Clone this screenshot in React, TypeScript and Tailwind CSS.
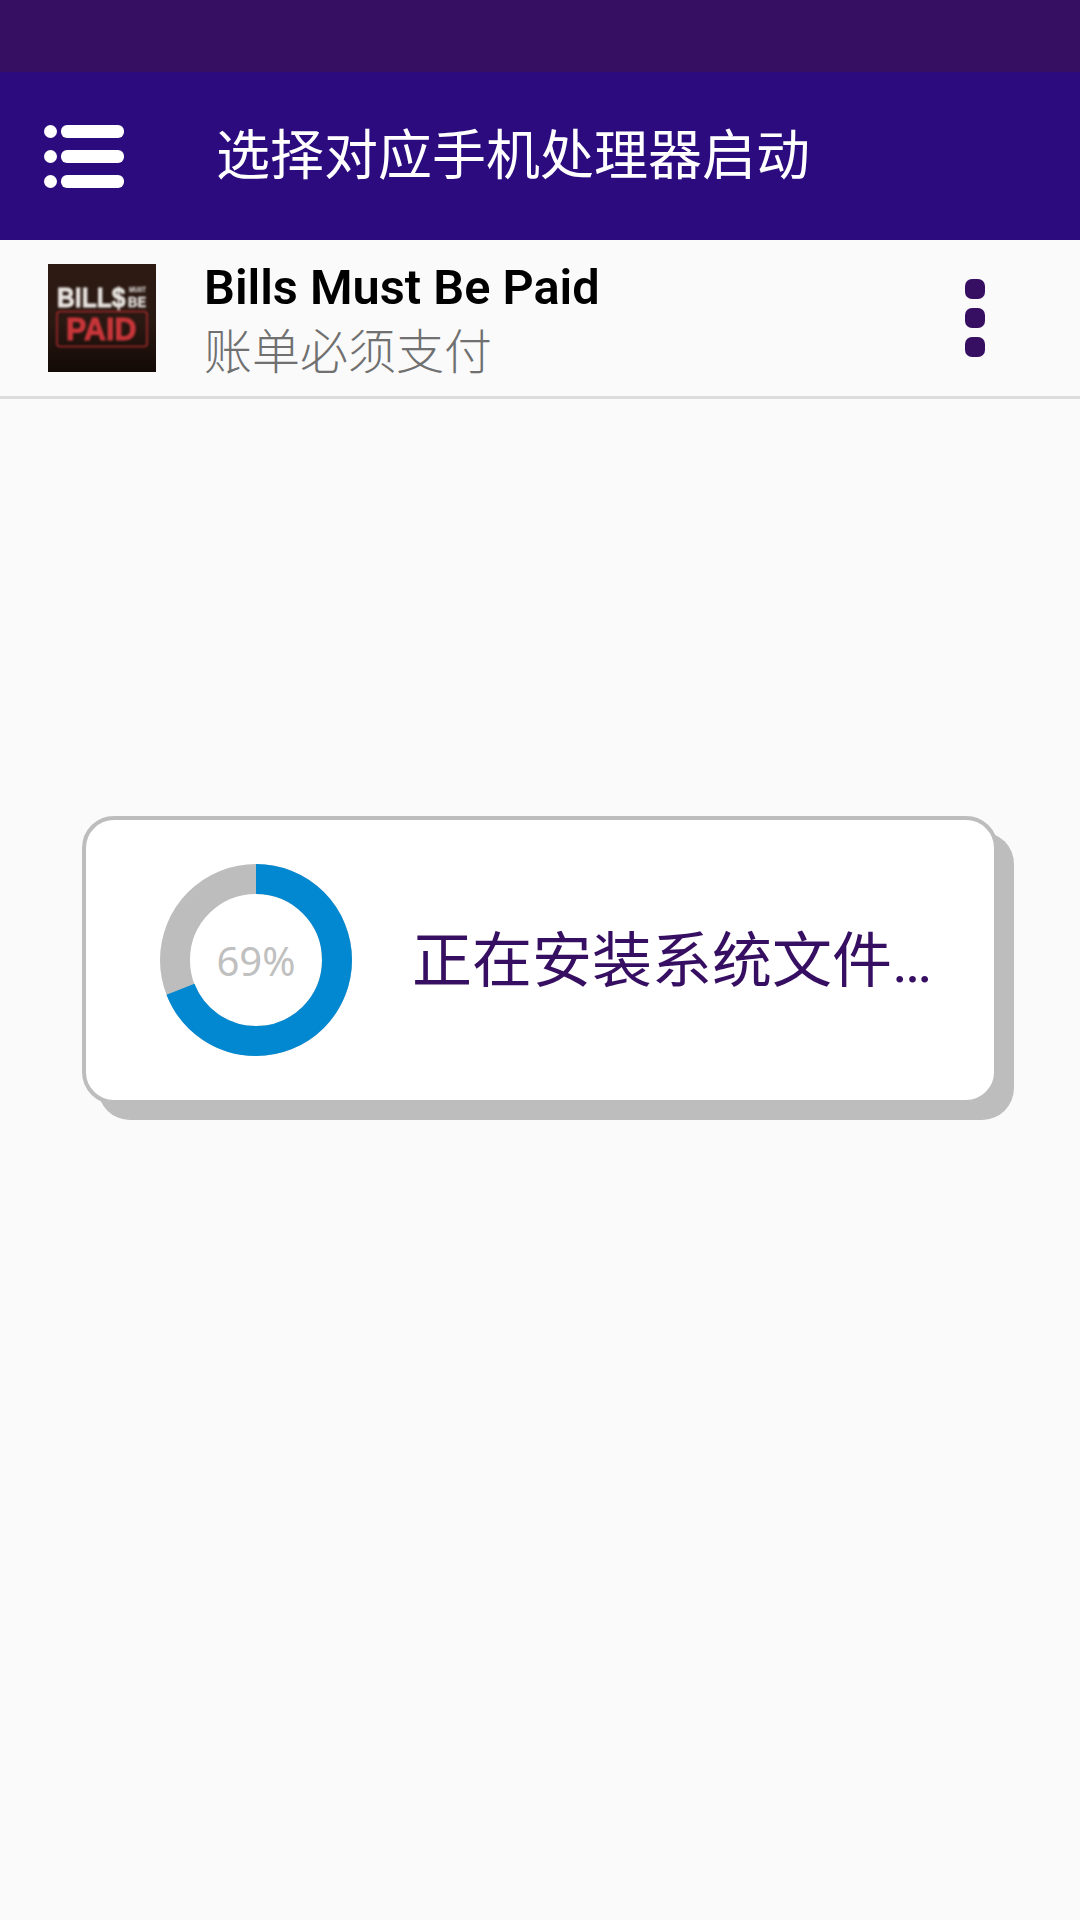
import React from 'react';

const cjk = "font-['Roboto','Noto_Sans_CJK_SC',sans-serif]";

const MenuIcon = () => (
  <div className="flex flex-col gap-[12px] w-[81px]">
    {[0, 1, 2].map((i) => (
      <div key={i} className="flex items-center gap-[4px]">
        <div className="w-[13px] h-[13px] rounded-full bg-white" />
        <div className="w-[63px] h-[13px] rounded-[6px] bg-white" />
      </div>
    ))}
  </div>
);

// game logo, slightly blurred like the upscaled artwork
const Thumb = () => (
  <div className="w-[108px] h-[108px] shrink-0 overflow-hidden bg-[linear-gradient(180deg,#2c1a13_0%,#2a1812_55%,#130a06_100%)]">
    <svg width="108" height="108" viewBox="0 0 108 108" className="blur-[0.8px]" fontFamily="'Liberation Sans', sans-serif" fontWeight="700">
      <text transform="translate(9 43) scale(0.88 1)" fontSize="28" fill="#e8e4e0" stroke="#e8e4e0" strokeWidth="0.8">BILL$</text>
      <text transform="translate(81 28) scale(0.75 1)" fontSize="8" fill="#d0cbc6" stroke="#d0cbc6" strokeWidth="0.3">MUST</text>
      <text transform="translate(80 43) scale(0.93 1)" fontSize="14" fill="#e8e4e0" stroke="#e8e4e0" strokeWidth="0.4">BE</text>
      <rect x="9" y="47.5" width="90" height="35" rx="3" fill="none" stroke="#a52a2c" strokeWidth="1.6" />
      <text transform="translate(18 76) scale(0.95 1)" fontSize="32" fill="#c8363a" stroke="#c8363a" strokeWidth="1">PAID</text>
    </svg>
  </div>
);

const Ring = ({ value }: { value: number }) => {
  const r = 81;
  const c = 2 * Math.PI * r;
  return (
    <div className="relative w-[192px] h-[192px] shrink-0">
      <svg width="192" height="192" viewBox="0 0 192 192">
        <circle cx="96" cy="96" r={r} fill="none" stroke="#bdbdbd" strokeWidth="30" />
        <circle
          cx="96"
          cy="96"
          r={r}
          fill="none"
          stroke="#0288d1"
          strokeWidth="30"
          strokeDasharray={`${c * value / 100} ${c}`}
          transform="rotate(-90 96 96)"
        />
      </svg>
      <div className="absolute inset-0 flex items-center justify-center pt-[2px] text-[40px] text-[#c0c0c0] font-['Noto_Sans',sans-serif]">
        {value}%
      </div>
    </div>
  );
};

export default function App() {
  return (
    <div className={`w-[1080px] h-[1920px] flex flex-col bg-[#fafafa] overflow-hidden ${cjk}`}>
      <div className="h-[72px] bg-[#370f62]" />
      <div className="h-[168px] bg-[#2b0b7e] flex items-center pl-[44px]">
        <MenuIcon />
        <div className="ml-[91px] pt-[2px] text-[54px] leading-none text-white">选择对应手机处理器启动</div>
      </div>

      <div className="h-[156px] flex items-center pl-[48px]">
        <Thumb />
        <div className="ml-[48px] flex flex-col flex-1 pt-[8px]">
          <div className="text-[48.7px] leading-[60px] font-semibold text-black">Bills Must Be Paid</div>
          <div className="mt-[2px] text-[48px] leading-[66px] font-light text-[#707070]">账单必须支付</div>
        </div>
        <div className="flex flex-col gap-[9px] mr-[95px]">
          <div className="w-[20px] h-[20px] rounded-[7px] bg-[#370f62]" />
          <div className="w-[20px] h-[20px] rounded-[7px] bg-[#370f62]" />
          <div className="w-[20px] h-[20px] rounded-[7px] bg-[#370f62]" />
        </div>
      </div>
      <div className="h-[3px] bg-[#dcdcdc]" />

      <div className="pt-[417px] pl-[82px]">
        <div className="w-[916px] h-[288px] bg-white border-[4px] border-[#bdbdbd] rounded-[32px] shadow-[16px_16px_0_#bdbdbd] flex items-center pl-[74px]">
          <Ring value={69} />
          <div className="ml-[60px] pt-[3px] text-[60px] leading-none text-[#370f62] whitespace-nowrap">正在安装系统文件…</div>
        </div>
      </div>
    </div>
  );
}
